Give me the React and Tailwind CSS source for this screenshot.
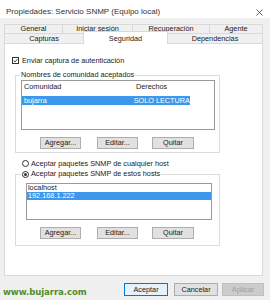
function Btn({ label, className = "" }) {
  return (
    <div
      className={`h-[12px] flex items-center justify-center border border-[#adadad] bg-[#e1e1e1] text-[#222] leading-none ${className}`}
    >
      {label}
    </div>
  )
}

function Radio({ checked }) {
  return (
    <span className="w-[7px] h-[7px] rounded-full border border-[#333] bg-white flex items-center justify-center shrink-0">
      {checked && <span className="w-[3px] h-[3px] rounded-full bg-[#333]" />}
    </span>
  )
}

function ButtonRow() {
  return (
    <div className="flex h-[12px]">
      <Btn label="Agregar..." className="ml-[24px] w-[41px]" />
      <Btn label="Editar..." className="ml-[16px] w-[41px]" />
      <Btn label="Quitar" className="ml-[14px] w-[42px]" />
    </div>
  )
}

export default function App() {
  return (
    <div className="w-[270px] h-[300px] overflow-hidden bg-[#f0f0f0] text-[7.3px] text-[#222] whitespace-nowrap font-['Liberation_Sans',Arial,sans-serif] flex flex-col">
      {/* title bar */}
      <div className="h-[18px] bg-white flex items-start justify-between pl-[6px] pr-[7px] pt-[8px] shrink-0">
        <span className="text-[8px] leading-[8px] text-[#333]">Propiedades: Servicio SNMP (Equipo local)</span>
        <svg width="7" height="7" viewBox="0 0 7 7" className="mt-[1px]">
          <path d="M0.5 0.5 L6.5 6.5 M6.5 0.5 L0.5 6.5" stroke="#444" strokeWidth="0.8" />
        </svg>
      </div>

      {/* tabs */}
      <div className="ml-[4px] w-[259px] mt-[6px] shrink-0">
        <div className="flex h-[9px]">
          <div className="w-[59px] border-t border-l border-r border-[#d9d9d9] flex items-center justify-center leading-none">General</div>
          <div className="w-[70px] border-t border-r border-[#d9d9d9] flex items-center justify-center leading-none">Iniciar sesión</div>
          <div className="w-[77px] border-t border-r border-[#d9d9d9] flex items-center justify-center leading-none">Recuperación</div>
          <div className="w-[53px] border-t border-r border-[#d9d9d9] flex items-center justify-center leading-none">Agente</div>
        </div>
        <div className="flex h-[10px]">
          <div className="w-[79px] border-t border-l border-[#d9d9d9] flex items-center justify-center leading-none">Capturas</div>
          <div className="relative z-10 w-[85px] h-[13px] -mt-[2px] bg-white border-t border-l border-r border-[#d9d9d9] flex items-start justify-center pt-[3px] leading-none">
            Seguridad
          </div>
          <div className="w-[95px] border-t border-r border-[#d9d9d9] flex items-center justify-center leading-none">Dependencias</div>
        </div>
      </div>

      {/* panel */}
      <div className="ml-[4px] w-[259px] h-[233px] shrink-0 bg-white border border-[#d9d9d9] flex flex-col">
        <div className="mt-[13px] pl-[7px] flex items-center gap-[3px] h-[7px]">
          <span className="w-[7px] h-[7px] border border-[#333] bg-white flex items-center justify-center">
            <svg width="5" height="5" viewBox="0 0 5 5">
              <path d="M0.5 2.6 L1.9 4 L4.5 1" stroke="#222" strokeWidth="0.8" fill="none" />
            </svg>
          </span>
          <span className="leading-none">Enviar captura de autenticación</span>
        </div>

        <fieldset className="mt-[7px] ml-[10px] w-[205px] border border-[#dcdcdc] pb-[3px]">
          <legend className="ml-[4px] px-[1px] leading-[8px]">Nombres de comunidad aceptados</legend>
          <div className="mt-[1px] ml-[5px] w-[194px] h-[50px] border border-[#9a9a9a] bg-white">
            <div className="flex h-[12px] items-center">
              <span className="w-[112px] pl-[2px] leading-none">Comunidad</span>
              <span className="pl-[2px] leading-none">Derechos</span>
            </div>
            <div className="mt-[3px] flex h-[9px] w-[168px] items-center bg-[#3d97ec] text-white">
              <span className="w-[112px] pl-[2px] leading-none">bujarra</span>
              <span className="pl-[2px] leading-none">SOLO LECTURA</span>
            </div>
          </div>
          <div className="mt-[7px]">
            <ButtonRow />
          </div>
        </fieldset>

        <div className="mt-[7px] pl-[17px] flex items-center gap-[2px] h-[7px]">
          <Radio />
          <span className="leading-none">Aceptar paquetes SNMP de cualquier host</span>
        </div>

        <fieldset className="mt-[3px] ml-[10px] w-[205px] border border-[#dcdcdc] pb-[6px]">
          <legend className="ml-[5px] px-[1px] h-[8px] flex items-center gap-[2px]">
            <Radio checked />
            <span className="leading-none">Aceptar paquetes SNMP de estos hosts</span>
          </legend>
          <div className="mt-[5px] ml-[10px] w-[186px] h-[37px] border border-[#9a9a9a] bg-white">
            <div className="h-[8px] pl-[1px] flex items-center leading-none">localhost</div>
            <div className="h-[8px] pl-[1px] flex items-center leading-none bg-[#3d97ec] text-white">192.168.1.222</div>
          </div>
          <div className="mt-[7px]">
            <ButtonRow />
          </div>
        </fieldset>
      </div>

      {/* footer */}
      <div className="flex items-start justify-between pt-[7px] pl-[3px] pr-[6px]">
        <span className="mt-[3px] font-['DejaVu_Sans',Verdana,sans-serif] text-[8.6px] leading-[13px] text-[#4f8f2c] font-semibold tracking-[-0.1px]">
          www.bujarra.com
        </span>
        <div className="flex">
          <div className="w-[44px] h-[13px] flex items-center justify-center border border-[#0078d7] bg-[#e5f1fb] leading-none">Aceptar</div>
          <div className="ml-[6px] w-[44px] h-[13px] flex items-center justify-center border border-[#adadad] bg-[#e1e1e1] leading-none">Cancelar</div>
          <div className="ml-[4px] w-[42px] h-[13px] flex items-center justify-center border border-[#bfbfbf] bg-[#cccccc] text-[#a0a0a0] leading-none">Aplicar</div>
        </div>
      </div>
    </div>
  )
}
